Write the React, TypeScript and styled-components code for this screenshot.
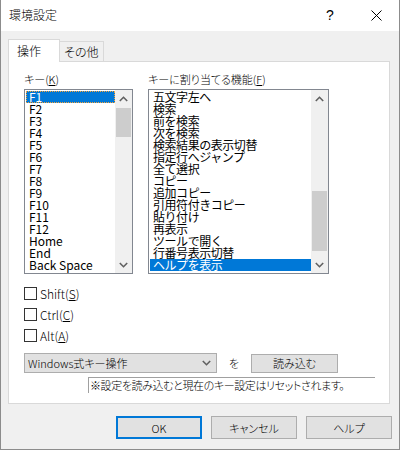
import styled, { createGlobalStyle } from 'styled-components';

const GlobalStyle = createGlobalStyle`
    html, body {
        margin: 0;
        padding: 0;
        background: #ffffff;
    }

    body {
        font-family: 'Noto Sans CJK JP', 'DejaVu Sans', sans-serif;
        font-size: 12px;
        font-weight: 300;
        color: #000000;
    }
`;

const keyItems = [
    'F1', 'F2', 'F3', 'F4', 'F5', 'F6', 'F7', 'F8', 'F9', 'F10', 'F11', 'F12',
    'Home', 'End', 'Back Space',
];

const functionItems = [
    '五文字左へ',
    '検索',
    '前を検索',
    '次を検索',
    '検索結果の表示切替',
    '指定行へジャンプ',
    '全て選択',
    'コピー',
    '追加コピー',
    '引用符付きコピー',
    '貼り付け',
    '再表示',
    'ツールで開く',
    '行番号表示切替',
    'ヘルプを表示',
];

const modifiers = [
    { name: 'Shift', key: 'S' },
    { name: 'Ctrl', key: 'C' },
    { name: 'Alt', key: 'A' },
];

function Chevron({ up }: { up?: boolean }) {
    return (
        <svg width="9" height="6" viewBox="0 0 9 6">
            <polyline
                points={up ? '0.8,5 4.5,1.3 8.2,5' : '0.8,1 4.5,4.7 8.2,1'}
                fill="none"
                stroke="#606060"
                strokeWidth="1.6"
            />
        </svg>
    );
}

function ScrollBar({ offset, size }: { offset: number; size: number }) {
    return (
        <ScrollTrack>
            <ArrowButton>
                <Chevron up />
            </ArrowButton>
            <TrackArea>
                <Thumb $offset={offset} $size={size} />
            </TrackArea>
            <ArrowButton>
                <Chevron />
            </ArrowButton>
        </ScrollTrack>
    );
}

export default function App() {
    return (
        <>
            <GlobalStyle />
            <Window>
                <TitleBar>
                    <span className="title">環境設定</span>
                    <TitleButton>?</TitleButton>
                    <TitleButton>
                        <svg width="11" height="11" viewBox="0 0 11 11">
                            <path d="M0.5 0.5 L10.5 10.5 M10.5 0.5 L0.5 10.5" stroke="#000" strokeWidth="1" />
                        </svg>
                    </TitleButton>
                </TitleBar>

                <Body>
                    <TabRow>
                        <Tab $active>操作</Tab>
                        <Tab>その他</Tab>
                    </TabRow>

                    <Panel>
                        <ListsRow>
                            <ListColumn>
                                <FieldLabel>
                                    キー(<u>K</u>)
                                </FieldLabel>
                                <ListBox $width={109}>
                                    <Items $mono={false}>
                                        {keyItems.map((k, i) => (
                                            <Item key={k} $selected={i === 0} $focused={i === 0}>
                                                {k}
                                            </Item>
                                        ))}
                                    </Items>
                                    <ScrollBar offset={1} size={29} />
                                </ListBox>
                            </ListColumn>

                            <ListColumn>
                                <FieldLabel>
                                    キーに割り当てる機能(<u>F</u>)
                                </FieldLabel>
                                <ListBox $width={181}>
                                    <Items $mono>
                                        {functionItems.map((f, i) => (
                                            <Item key={f} $selected={i === functionItems.length - 1}>
                                                {f}
                                            </Item>
                                        ))}
                                    </Items>
                                    <ScrollBar offset={84} size={60} />
                                </ListBox>
                            </ListColumn>
                        </ListsRow>

                        <CheckList>
                            {modifiers.map((m) => (
                                <CheckRow key={m.name}>
                                    <CheckBox />
                                    <span>
                                        {m.name}(<u>{m.key}</u>)
                                    </span>
                                </CheckRow>
                            ))}
                        </CheckList>

                        <ComboRow>
                            <Combo>
                                <span>Windows式キー操作</span>
                                <Chevron />
                            </Combo>
                            <Particle>を</Particle>
                            <PushButton $width={87} $height={19}>
                                読み込む
                            </PushButton>
                        </ComboRow>

                        <Note>※設定を読み込むと現在のキー設定はリセットされます。</Note>
                    </Panel>

                    <Footer>
                        <PushButton $width={86} $height={23} $default>
                            OK
                        </PushButton>
                        <PushButton $width={86} $height={23}>
                            キャンセル
                        </PushButton>
                        <PushButton $width={86} $height={23}>
                            ヘルプ
                        </PushButton>
                    </Footer>
                </Body>
            </Window>
        </>
    );
}

const Window = styled.div`
    width: 400px;
    height: 450px;
    box-sizing: border-box;
    border: 1px solid #8c8c8c;
    border-top: none;
    display: flex;
    flex-direction: column;
    background: #f0f0f0;
    font-feature-settings: 'palt';
`;

const TitleBar = styled.div`
    height: 31px;
    flex: 0 0 31px;
    background: #ffffff;
    display: flex;
    align-items: center;
    padding-left: 8px;

    .title {
        flex: 1;
        font-size: 12px;
        line-height: 12px;
        margin-top: -1px;
    }
`;

const TitleButton = styled.div`
    width: 46px;
    height: 31px;
    display: flex;
    align-items: center;
    justify-content: center;
    font-family: 'Liberation Sans', sans-serif;
    font-size: 14px;
    margin-top: -1px;
`;

const Body = styled.div`
    flex: 1;
    display: flex;
    flex-direction: column;
    padding: 8px 7px 0 7px;
`;

const TabRow = styled.div`
    display: flex;
    align-items: flex-end;
    position: relative;
    z-index: 1;
`;

const Tab = styled.div<{ $active?: boolean }>`
    box-sizing: border-box;
    height: ${(p) => (p.$active ? '23px' : '20px')};
    width: ${(p) => (p.$active ? '52px' : '44px')};
    margin-bottom: ${(p) => (p.$active ? '-1px' : '0')};
    padding-left: ${(p) => (p.$active ? '8px' : '4px')};
    padding-top: ${(p) => (p.$active ? '4px' : '3px')};
    line-height: 14px;
    border: 1px solid #d9d9d9;
    border-bottom: none;
    border-left: ${(p) => (p.$active ? '1px solid #d9d9d9' : 'none')};
    background: ${(p) => (p.$active ? '#ffffff' : '#f0f0f0')};
`;

const Panel = styled.div`
    box-sizing: border-box;
    width: 382px;
    height: 343px;
    border: 1px solid #d9d9d9;
    background: #ffffff;
    padding: 11px 0 0 15px;
    display: flex;
    flex-direction: column;
`;

const ListsRow = styled.div`
    display: flex;
    gap: 15px;
`;

const ListColumn = styled.div`
    display: flex;
    flex-direction: column;
`;

const FieldLabel = styled.div`
    font-size: 11px;
    line-height: 12px;
    height: 12px;
    margin-bottom: 4px;

    u {
        text-underline-offset: 1px;
    }
`;

const ListBox = styled.div<{ $width: number }>`
    box-sizing: border-box;
    width: ${(p) => p.$width}px;
    height: 185px;
    border: 1px solid #828790;
    display: flex;
    background: #ffffff;
`;

const Items = styled.div<{ $mono: boolean }>`
    flex: 1;
    padding: 1px 0 0 1px;
    overflow: hidden;
    font-weight: 400;
    font-feature-settings: normal;
    letter-spacing: ${(p) => (p.$mono ? '-0.45px' : '0')};
`;

const Item = styled.div<{ $selected?: boolean; $focused?: boolean }>`
    box-sizing: border-box;
    height: 12px;
    line-height: 12px;
    padding-left: 3px;
    white-space: nowrap;
    background: ${(p) => (p.$selected ? '#0078d7' : 'transparent')};
    color: ${(p) => (p.$selected ? '#ffffff' : '#000000')};
    outline: ${(p) => (p.$focused ? '1px dotted #f7a53a' : 'none')};
    outline-offset: -1px;
`;

const ScrollTrack = styled.div`
    width: 17px;
    flex: 0 0 17px;
    background: #f0f0f0;
    display: flex;
    flex-direction: column;
`;

const ArrowButton = styled.div`
    height: 17px;
    flex: 0 0 17px;
    display: flex;
    align-items: center;
    justify-content: center;
`;

const TrackArea = styled.div`
    flex: 1;
    display: flex;
    flex-direction: column;
`;

const Thumb = styled.div<{ $offset: number; $size: number }>`
    margin: ${(p) => p.$offset}px 1px 0 1px;
    height: ${(p) => p.$size}px;
    background: #cdcdcd;
`;

const CheckList = styled.div`
    display: flex;
    flex-direction: column;
    gap: 8px;
    margin-top: 13px;
`;

const CheckRow = styled.div`
    display: flex;
    align-items: center;
    height: 13px;
    line-height: 13px;

    span {
        margin-left: 3px;
    }
`;

const CheckBox = styled.div`
    box-sizing: border-box;
    width: 13px;
    height: 13px;
    border: 1px solid #333333;
    background: #ffffff;
`;

const ComboRow = styled.div`
    display: flex;
    align-items: center;
    height: 20px;
    margin-top: 11px;
    font-size: 11px;
`;

const Combo = styled.div`
    box-sizing: border-box;
    width: 193px;
    height: 20px;
    border: 1px solid #adadad;
    background: #e1e1e1;
    display: flex;
    align-items: center;
    justify-content: space-between;
    padding: 0 5px 0 3px;
`;

const Particle = styled.div`
    width: 34px;
    text-align: center;
`;

const PushButton = styled.div<{ $width: number; $height: number; $default?: boolean }>`
    box-sizing: border-box;
    width: ${(p) => p.$width}px;
    height: ${(p) => p.$height}px;
    border: ${(p) => (p.$default ? '2px solid #0078d7' : '1px solid #adadad')};
    background: #e1e1e1;
    display: flex;
    align-items: center;
    justify-content: center;
    font-size: 11px;
`;

const Note = styled.div`
    box-sizing: border-box;
    width: 287px;
    height: 16px;
    margin: 4px 0 0 64px;
    border-top: 1px solid #a0a0a0;
    border-left: 1px solid #a0a0a0;
    padding-left: 1px;
    font-size: 11px;
    letter-spacing: -0.4px;
    line-height: 15px;
    white-space: nowrap;
`;

const Footer = styled.div`
    display: flex;
    justify-content: flex-end;
    gap: 9px;
    margin-top: 12px;
`;
